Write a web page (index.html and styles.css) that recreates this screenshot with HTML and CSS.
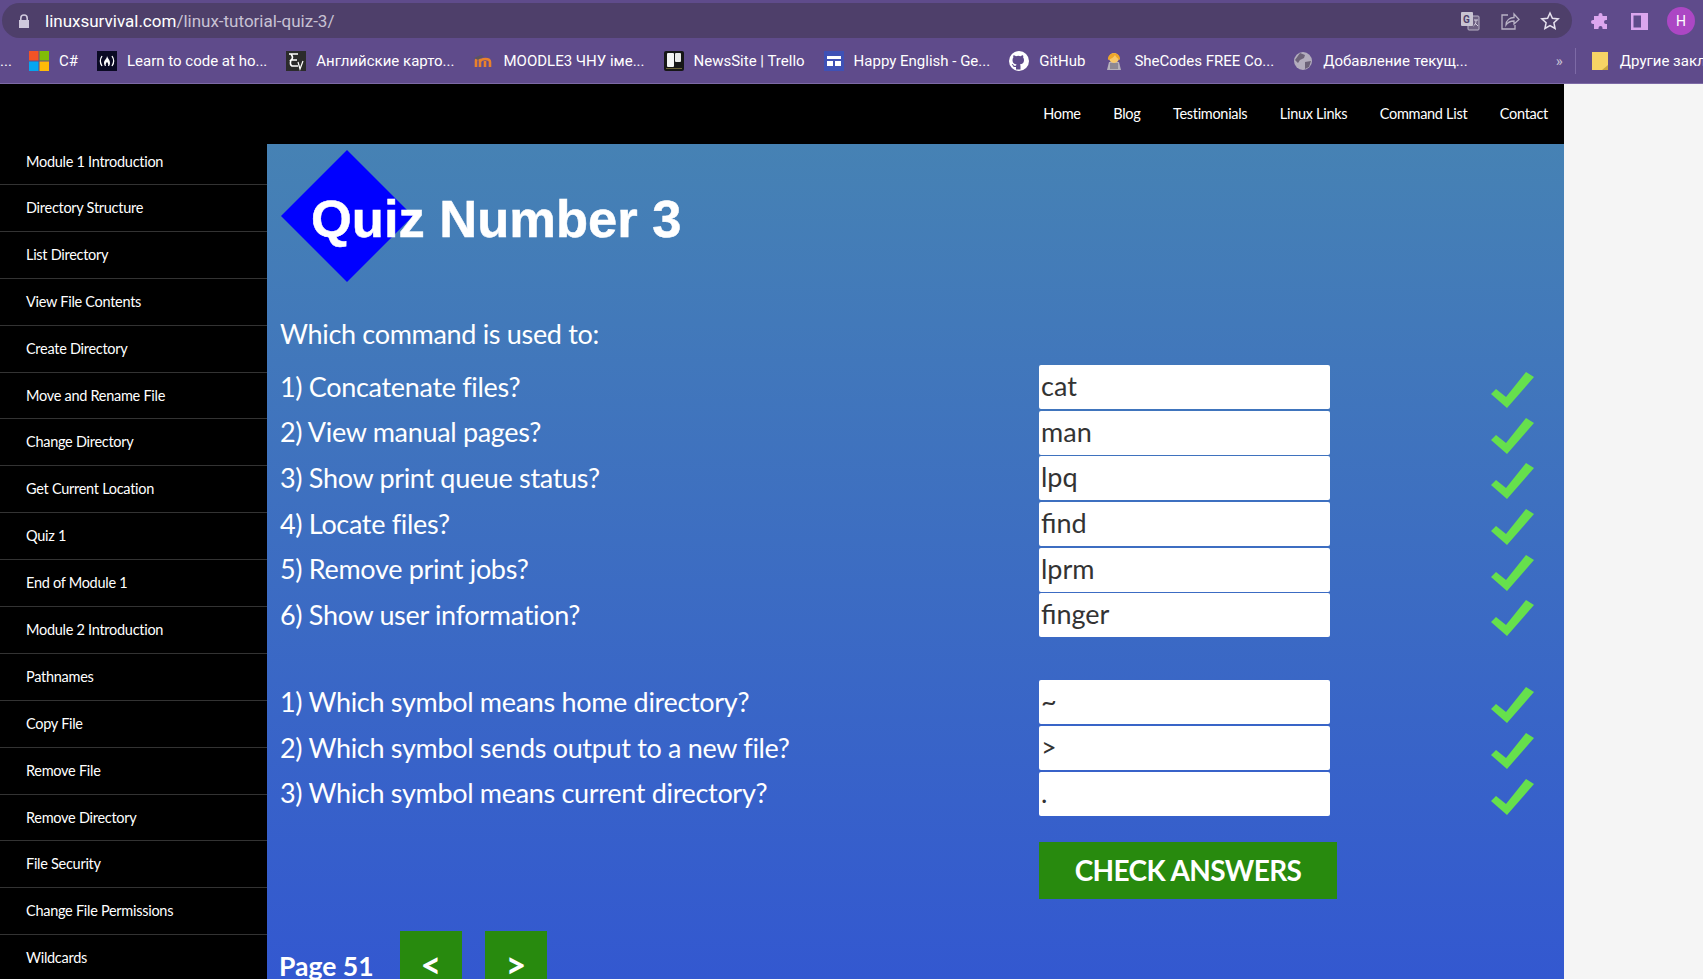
FILE: index.html
```html
<!DOCTYPE html>
<html lang="en">
<head>
    <meta charset="UTF-8">
    <title>Linux Tutorial Quiz 3</title>
    <link rel="stylesheet" href="styles.css">
</head>
<body>

    <div class="browser">
        <div class="toolbar">
            <div class="urlbar">
                <svg class="lock" width="12" height="14" viewBox="0 0 12 14"><path fill="#cfc8dc" d="M2 6V4.200a4 4 0 0 1 8 0V6h1v8H1V6zm1.600 0h4.800V4.200a2.400 2.400 0 0 0-4.800 0z"/></svg>
                <span class="url"><b>linuxsurvival.com</b>/linux-tutorial-quiz-3/</span>
                <div class="url-icons">
                    <svg width="20" height="20" viewBox="0 0 20 20"><rect x="8" y="5" width="11" height="14" rx="1" fill="#6d6082" stroke="#b9b3c6"/><rect x="1" y="1" width="12" height="14" rx="1" fill="#c9c4d2"/><text x="3" y="12" font-size="10" font-weight="700" fill="#4e3f6a" font-family="Roboto">G</text><path d="M14 9h4M16 9v1c0 2-1 4-2.500 5M15 12l3 3" fill="none" stroke="#d6d0e0"/></svg>
                    <svg width="20" height="20" viewBox="0 0 20 20" fill="none" stroke="#b9b3c6" stroke-width="1.300"><path d="M8 4H2v14h13v-4"/><path d="M6 14c0-5 4-7.500 8-7.500V3l5 5.500-5 4.500V10c-3 0-6 1-8 4z"/></svg>
                    <svg width="20" height="20" viewBox="0 0 20 20" fill="none" stroke="#e6e1ee" stroke-width="1.500"><path d="M10 2l2.400 5.300 5.800.6-4.300 3.900 1.200 5.700L10 14.600l-5.100 2.900 1.200-5.700L1.800 7.900l5.800-.6z"/></svg>
                </div>
            </div>
            <div class="chrome-icons">
                <svg width="20" height="20" viewBox="0 0 20 20"><path fill="#dba6ee" d="M7.500 5V4a2 2 0 0 1 4 0v1H16v4h-1a2 2 0 0 0 0 4h1v5h-4.500v-1a2 2 0 0 0-4 0v1H3v-5H2a2 2 0 0 1 0-4h1V5z"/></svg>
                <svg width="20" height="20" viewBox="0 0 20 20"><rect x="2" y="2" width="17" height="17" fill="#dba6ee"/><rect x="4.500" y="4.500" width="7.500" height="12" fill="#5f4b8b"/></svg>
                <span class="avatar">H</span>
            </div>
        </div>
        <div class="bookmarks">
            <span class="bm-dots">...</span>
            <a class="bm"><svg width="20" height="20" viewBox="0 0 20 20"><rect width="9.500" height="9.500" fill="#f35325"/><rect x="10.500" width="9.500" height="9.500" fill="#81bc06"/><rect y="10.500" width="9.500" height="9.500" fill="#05a6f0"/><rect x="10.500" y="10.500" width="9.500" height="9.500" fill="#ffba08"/></svg>C#</a>
            <a class="bm"><svg width="20" height="20" viewBox="0 0 20 20"><rect width="20" height="20" fill="#0a0a23"/><path d="M5 5C3 8 3 12 5 15M15 5c2 3 2 7 0 10" fill="none" stroke="#fff" stroke-width="1.300"/><path d="M10 5c1 3 3 4 3 7 0 2-1 3-1 3h-1c1-2-1-4-1-4s-2 2-1 4H8s-1-1-1-3c0-3 3-4 3-7z" fill="#fff"/></svg>Learn to code at ho...</a>
            <a class="bm"><svg width="20" height="20" viewBox="0 0 20 20"><rect width="20" height="20" fill="#2b2b2b"/><path d="M3 3h9M5 3c2 3 2 4 0 6h6M5 9c-1 3-1 5 1 6h6" fill="none" stroke="#fff" stroke-width="1.600"/><path d="M12 11l2 7 3-8" fill="none" stroke="#fff" stroke-width="1.200"/></svg>Английские карто...</a>
            <a class="bm"><svg width="20" height="20" viewBox="0 0 20 20"><path d="M3 16v-6c0-3 4-3 4 0v6M7 11c1-4 10-4 10 0v5M12 16v-6" fill="none" stroke="#e9812c" stroke-width="2.600"/><path d="M1 7l7-3 3 1-6 4z" fill="#5b5560"/></svg>MOODLE3 ЧНУ іме...</a>
            <a class="bm"><svg width="20" height="20" viewBox="0 0 20 20"><rect width="20" height="20" rx="2" fill="#161616"/><rect x="3" y="2" width="7" height="14" rx="1" fill="#f4f4f4"/><rect x="11" y="2" width="6" height="9" rx="1" fill="#e8e8e8"/><rect x="2" y="17" width="16" height="1" fill="#6b6238"/></svg>NewsSite | Trello</a>
            <a class="bm"><svg width="20" height="20" viewBox="0 0 20 20"><rect width="20" height="20" fill="#3f51b5"/><rect x="3" y="5" width="14" height="3" fill="#fff"/><rect x="3" y="10" width="6" height="5" fill="#fff"/><rect x="11" y="10" width="6" height="5" fill="#fff"/></svg>Happy English - Ge...</a>
            <a class="bm"><svg width="20" height="20" viewBox="0 0 16 16"><circle cx="8" cy="8" r="8" fill="#fff"/><path fill="#5f4b8b" d="M5.600 14.800v-2c-2 .4-2.500-1-2.600-1.300-.2-.4-.5-.8-.8-1 .6-.3 1.200.3 1.500.8.500.8 1.300.6 1.900.4 0-.5.300-.9.500-1.100-1.800-.2-3.300-1-3.300-3.500 0-.8.300-1.400.7-1.900-.1-.2-.3-.9.100-1.800 0 0 .6-.2 2 .7a7 7 0 0 1 3.600 0c1.400-.9 2-.7 2-.7.400.9.200 1.600.1 1.800.4.500.7 1.100.7 1.900 0 2.500-1.500 3.300-3.300 3.500.3.200.5.700.5 1.300v2.900z"/></svg>GitHub</a>
            <a class="bm"><svg width="20" height="20" viewBox="0 0 20 20"><path d="M3 19l2-8h10l2 8z" fill="#b5b0ba"/><circle cx="10" cy="7" r="5" fill="#f7c86a"/><path d="M4 9C3 0 17 0 16 9c-2-1-4-3-5-5-1 2-4 4-7 5z" fill="#eda52a"/><rect x="6" y="12" width="8" height="6" fill="#8d8893"/></svg>SheCodes FREE Co...</a>
            <a class="bm"><svg width="20" height="20" viewBox="0 0 20 20"><circle cx="10" cy="10" r="9" fill="#b3adbd"/><path d="M7 2l5 2-1 3-4 2-2 3-3-3zM12 11l6-1-2 6-4 2z" fill="#6c6278"/></svg>Добавление текущ...</a>
            <span class="bm-more">»</span>
            <span class="bm-sep"></span>
            <a class="bm bm-other"><svg width="16" height="20" viewBox="0 0 16 20"><path d="M0 1h16v18H0z" fill="#f6d365"/><path d="M10 19l6-5v5z" fill="#c9a63f"/></svg>Другие закладки</a>
        </div>
    </div>

    <div class="site">
        <div class="page">
            <nav class="topnav">
                <a>Home</a>
                <a>Blog</a>
                <a>Testimonials</a>
                <a>Linux Links</a>
                <a>Command List</a>
                <a>Contact</a>
            </nav>
            <div class="columns">
                <ul class="sidebar">
                    <li>Module 1 Introduction</li>
                    <li>Directory Structure</li>
                    <li>List Directory</li>
                    <li>View File Contents</li>
                    <li>Create Directory</li>
                    <li>Move and Rename File</li>
                    <li>Change Directory</li>
                    <li>Get Current Location</li>
                    <li>Quiz 1</li>
                    <li>End of Module 1</li>
                    <li>Module 2 Introduction</li>
                    <li>Pathnames</li>
                    <li>Copy File</li>
                    <li>Remove File</li>
                    <li>Remove Directory</li>
                    <li>File Security</li>
                    <li>Change File Permissions</li>
                    <li>Wildcards</li>
                </ul>
                <main class="content">
                    <div class="banner">
                        <div class="diamond"></div>
                        <h1>Quiz Number 3</h1>
                    </div>
                    <p class="intro">Which command is used to:</p>

                    <div class="quiz-group">
                        <div class="quiz-row"><label>1) Concatenate files?</label><input type="text" value="cat"><svg class="tick" viewBox="0 0 44 36"><use href="#tick"/></svg></div>
                        <div class="quiz-row"><label>2) View manual pages?</label><input type="text" value="man"><svg class="tick" viewBox="0 0 44 36"><use href="#tick"/></svg></div>
                        <div class="quiz-row"><label>3) Show print queue status?</label><input type="text" value="lpq"><svg class="tick" viewBox="0 0 44 36"><use href="#tick"/></svg></div>
                        <div class="quiz-row"><label>4) Locate files?</label><input type="text" value="find"><svg class="tick" viewBox="0 0 44 36"><use href="#tick"/></svg></div>
                        <div class="quiz-row"><label>5) Remove print jobs?</label><input type="text" value="lprm"><svg class="tick" viewBox="0 0 44 36"><use href="#tick"/></svg></div>
                        <div class="quiz-row"><label>6) Show user information?</label><input type="text" value="finger"><svg class="tick" viewBox="0 0 44 36"><use href="#tick"/></svg></div>
                    </div>

                    <div class="quiz-group">
                        <div class="quiz-row"><label>1) Which symbol means home directory?</label><input type="text" value="~"><svg class="tick" viewBox="0 0 44 36"><use href="#tick"/></svg></div>
                        <div class="quiz-row"><label>2) Which symbol sends output to a new file?</label><input type="text" value="&gt;"><svg class="tick" viewBox="0 0 44 36"><use href="#tick"/></svg></div>
                        <div class="quiz-row"><label>3) Which symbol means current directory?</label><input type="text" value="."><svg class="tick" viewBox="0 0 44 36"><use href="#tick"/></svg></div>
                    </div>

                    <button class="check-btn">CHECK ANSWERS</button>

                    <div class="pager">
                        <span class="page-no">Page 51</span>
                        <button class="page-btn">&lt;</button>
                        <button class="page-btn">&gt;</button>
                    </div>
                </main>
            </div>
        </div>
        <div class="gutter"></div>
    </div>

    <svg width="0" height="0" class="defs">
        <symbol id="tick" viewBox="0 0 44 36"><path fill="#66e04c" d="M0 22l5-5 10 8L35 0l8 5-27 31z"/></symbol>
    </svg>

</body>
</html>
```

FILE: styles.css
```css
* {
    box-sizing: border-box;
}
html, body {
    margin: 0;
    height: 979px;
    overflow: hidden;
}
body {
    font-family: Lato, Arial, sans-serif;
    background-color: #f5f5f5;
}

/* browser frame */
.browser {
    height: 84px;
    background-color: #5f4b8b;
    border-bottom: 1px solid #7d6aa6;
    font-family: Roboto, Arial, sans-serif;
    color: #fff;
    overflow: hidden;
}
.toolbar {
    display: flex;
    align-items: center;
    height: 38px;
    padding-top: 3px;
}
.urlbar {
    display: flex;
    align-items: center;
    width: 1570px;
    height: 35px;
    margin-left: 2px;
    padding: 0 12px 0 16px;
    background-color: #4e3f6a;
    border-radius: 18px;
}
.lock {
    margin-right: 15px;
}
.url {
    font-size: 17px;
    color: #c8c2d4;
}
.url b {
    font-weight: 400;
    color: #fff;
}
.url-icons {
    display: flex;
    gap: 20px;
    margin-left: auto;
}
.chrome-icons {
    display: flex;
    align-items: center;
    gap: 18px;
    margin-left: 19px;
}
.avatar {
    width: 28px;
    height: 28px;
    border-radius: 50%;
    background-color: #ac47c4;
    font-size: 14px;
    line-height: 28px;
    text-align: center;
}
.bookmarks {
    display: flex;
    align-items: center;
    height: 45px;
    font-size: 15px;
    white-space: nowrap;
}
.bookmarks > * {
    flex: none;
}
.bm-dots {
    width: 29px;
}
.bm {
    display: flex;
    align-items: center;
    gap: 10px;
    margin-right: 19px;
}
.bm-more {
    margin: 0 12px 0 69px;
    color: #c8c2d4;
}
.bm-sep {
    width: 1px;
    height: 26px;
    margin-right: 16px;
    background-color: #7d6aa6;
}
.bm-other {
    gap: 12px;
}

/* site */
.site {
    display: flex;
}
.page {
    width: 1564px;
    flex-shrink: 0;
}
.gutter {
    flex: 1;
}
.topnav {
    display: flex;
    justify-content: flex-end;
    align-items: center;
    gap: 32.500px;
    height: 60px;
    padding: 0 16px 2px 0;
    background-color: #000;
    color: #fff;
    font-size: 14.500px;
    letter-spacing: -0.3px;
}
.columns {
    display: flex;
    height: 835px;
}
.sidebar {
    width: 267px;
    flex-shrink: 0;
    margin: 0;
    padding: 0;
    background-color: #000;
    list-style: none;
    color: #fff;
    font-size: 14.500px;
    letter-spacing: -0.28px;
}
.sidebar li {
    height: 46.900px;
    padding: 12px 0 0 26px;
    border-bottom: 1px solid #333;
    line-height: 22px;
}
.sidebar li:first-child {
    height: 41px;
    padding-top: 7px;
}
.content {
    flex: 1;
    padding: 6px 0 0 13px;
    background: linear-gradient(#4682b4, #3358d0);
    color: #fff;
}

/* title */
.banner {
    display: grid;
    align-items: center;
    height: 134px;
}
.diamond {
    grid-area: 1 / 1;
    width: 132px;
    height: 132px;
    margin: 0 0 2px 1px;
    background-color: #0000ff;
    clip-path: polygon(50% 0, 100% 50%, 50% 100%, 0 50%);
}
.banner h1 {
    grid-area: 1 / 1;
    margin: 2px 0 0 31px;
    font-family: "Liberation Sans", Arial, sans-serif;
    font-size: 52.500px;
    font-weight: 700;
    -webkit-text-stroke: 0.5px #fff;
    filter: blur(0.6px);
}
.intro {
    margin: 32px 0 13px;
    font-size: 27px;
    letter-spacing: -0.32px;
    line-height: 36px;
}

/* quiz */
.quiz-group {
    margin-bottom: 43px;
}
.quiz-row {
    display: flex;
    align-items: center;
    height: 44px;
    margin-bottom: 1.700px;
}
.quiz-row label {
    width: 759px;
    padding-bottom: 2px;
    font-size: 27px;
    letter-spacing: -0.32px;
}
.quiz-row input {
    width: 291px;
    height: 44px;
    padding: 0 2px 3px;
    border: 0;
    border-radius: 2px;
    background-color: #fff;
    color: #333;
    font-family: Lato, Arial, sans-serif;
    font-size: 27px;
}
.tick {
    width: 44px;
    height: 36px;
    margin: 6px 0 0 161px;
}
.defs {
    position: absolute;
}
.check-btn {
    display: block;
    width: 298px;
    height: 57px;
    margin: -17px 0 32px 759px;
    border: 0;
    background-color: #288a0e;
    color: #fff;
    font-family: Lato, Arial, sans-serif;
    font-size: 28px;
    font-weight: 700;
    letter-spacing: -0.6px;
}
.pager {
    display: flex;
    align-items: flex-start;
}
.page-no {
    width: 121px;
    margin-left: -1px;
    padding-top: 19px;
    font-size: 26.500px;
    font-weight: 700;
}
.page-btn {
    width: 62px;
    height: 62px;
    margin-right: 23px;
    padding-top: 5px;
    border: 0;
    background-color: #288a0e;
    color: #fff;
    font-family: Lato, Arial, sans-serif;
    font-size: 36px;
    font-weight: 700;
}
```
